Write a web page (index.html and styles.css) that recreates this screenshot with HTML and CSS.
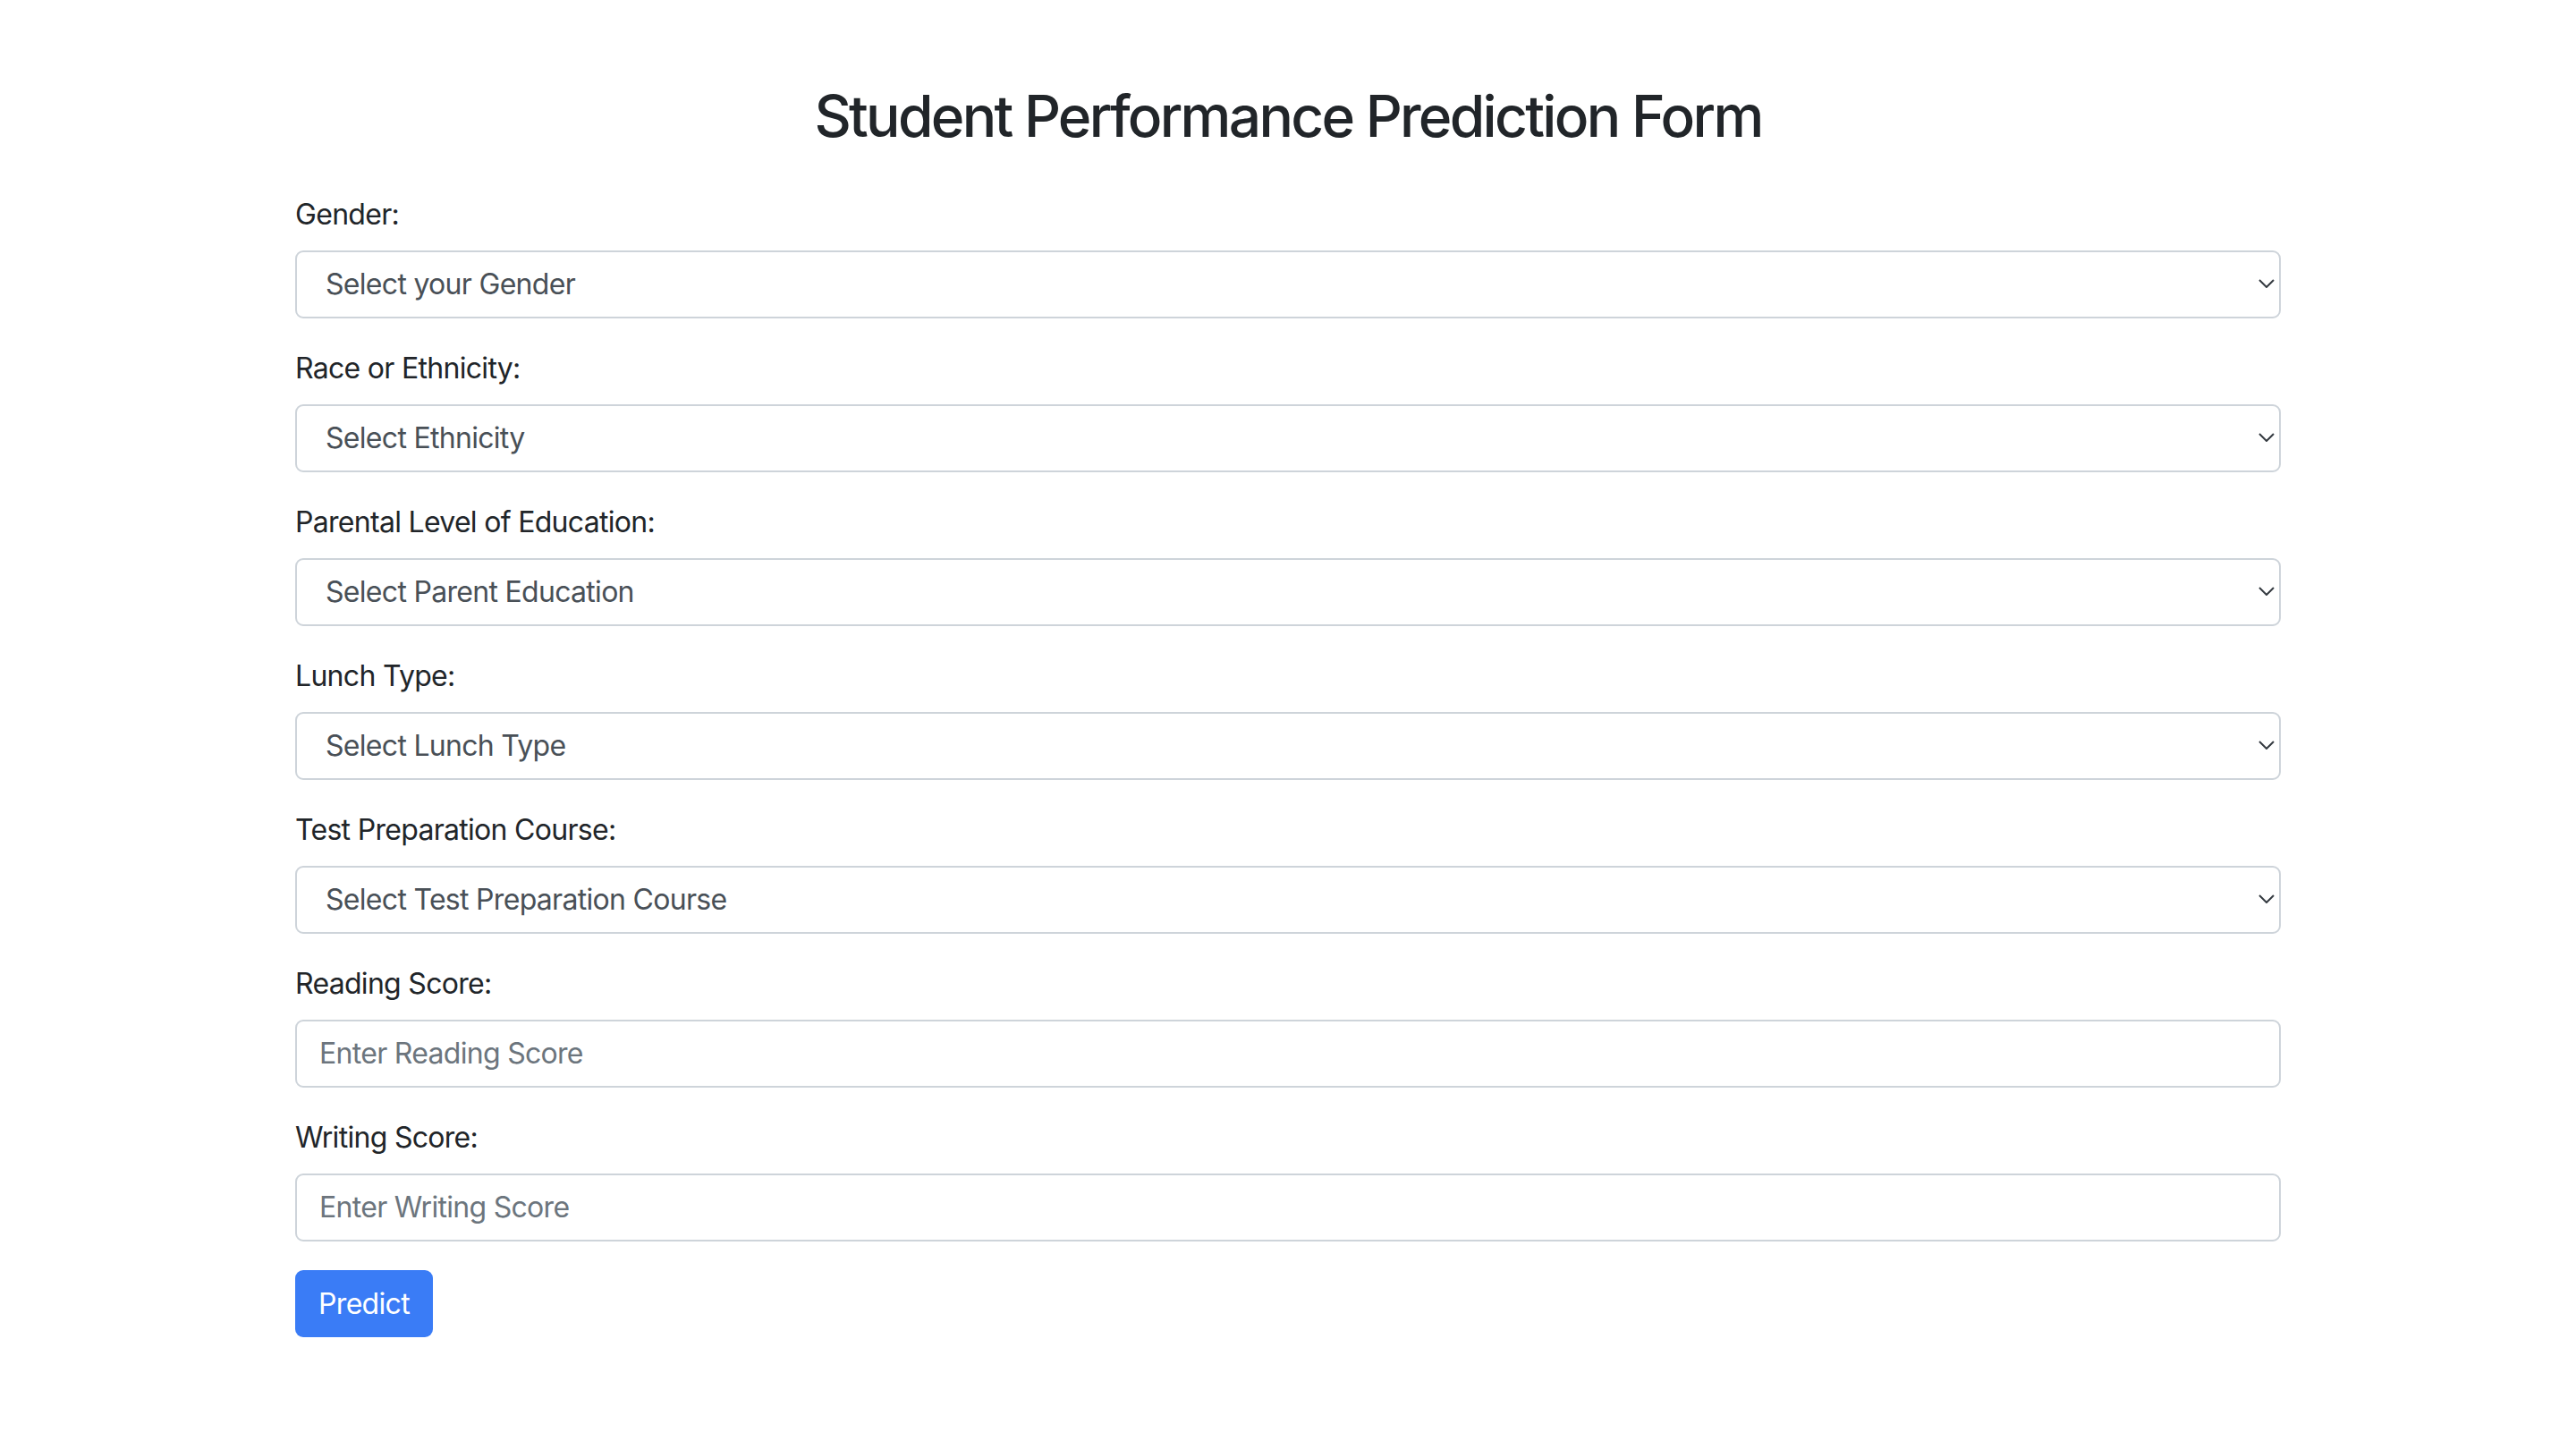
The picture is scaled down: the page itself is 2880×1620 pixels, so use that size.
FILE: index.html
```html
<!DOCTYPE html>
<html lang="en">
<head>
<meta charset="utf-8">
<title>Student Performance Prediction Form</title>
<link rel="stylesheet" href="styles.css">
</head>
<body>
<div class="container">
  <h2 class="title">Student Performance Prediction Form</h2>
  <form class="form">
    <div class="group">
      <label class="label" for="gender">Gender:</label>
      <div class="select-wrap">
        <select class="select" id="gender"><option>Select your Gender</option></select>
        <svg class="chev" viewBox="0 0 18 10" width="18" height="10"><path d="M1 1l8 8 8-8" fill="none" stroke="#343a40" stroke-width="2"/></svg>
      </div>
    </div>
    <div class="group">
      <label class="label" for="eth">Race or Ethnicity:</label>
      <div class="select-wrap">
        <select class="select" id="eth"><option>Select Ethnicity</option></select>
        <svg class="chev" viewBox="0 0 18 10" width="18" height="10"><path d="M1 1l8 8 8-8" fill="none" stroke="#343a40" stroke-width="2"/></svg>
      </div>
    </div>
    <div class="group">
      <label class="label" for="edu">Parental Level of Education:</label>
      <div class="select-wrap">
        <select class="select" id="edu"><option>Select Parent Education</option></select>
        <svg class="chev" viewBox="0 0 18 10" width="18" height="10"><path d="M1 1l8 8 8-8" fill="none" stroke="#343a40" stroke-width="2"/></svg>
      </div>
    </div>
    <div class="group">
      <label class="label" for="lunch">Lunch Type:</label>
      <div class="select-wrap">
        <select class="select" id="lunch"><option>Select Lunch Type</option></select>
        <svg class="chev" viewBox="0 0 18 10" width="18" height="10"><path d="M1 1l8 8 8-8" fill="none" stroke="#343a40" stroke-width="2"/></svg>
      </div>
    </div>
    <div class="group">
      <label class="label" for="prep">Test Preparation Course:</label>
      <div class="select-wrap">
        <select class="select" id="prep"><option>Select Test Preparation Course</option></select>
        <svg class="chev" viewBox="0 0 18 10" width="18" height="10"><path d="M1 1l8 8 8-8" fill="none" stroke="#343a40" stroke-width="2"/></svg>
      </div>
    </div>
    <div class="group">
      <label class="label" for="read">Reading Score:</label>
      <input class="input" id="read" type="number" placeholder="Enter Reading Score">
    </div>
    <div class="group">
      <label class="label" for="write">Writing Score:</label>
      <input class="input" id="write" type="number" placeholder="Enter Writing Score">
    </div>
    <button class="btn" type="button">Predict</button>
  </form>
</div>
</body>
</html>
```
FILE: styles.css
```css
* { box-sizing: border-box; }
html, body { margin: 0; padding: 0; background: #fff; }
body {
  font-family: Inter, "Noto Sans", "Liberation Sans", sans-serif;
  color: #212529;
}
.container {
  width: 2220px;
  margin: 0 auto;
}
.title {
  font-size: 64px;
  font-weight: 500;
  line-height: 1.2;
  text-align: center;
  margin: 92px 0 47px;
  color: #212529;
  letter-spacing: -2.7px;
}
.form { display: flex; flex-direction: column; }
.group { margin-bottom: 32px; }
.label {
  display: block;
  font-size: 32px;
  line-height: 48px;
  margin-bottom: 16px;
  color: #212529;
  letter-spacing: -0.7px;
}
.select-wrap { position: relative; }
.select, .input {
  display: block;
  width: 100%;
  height: 76px;
  border: 2px solid #ced4da;
  border-radius: 9px;
  background: #fff;
  font-family: inherit;
  font-size: 32px;
  letter-spacing: -0.7px;
  color: #495057;
  outline: none;
  margin: 0;
}
.select {
  appearance: none;
  -webkit-appearance: none;
  padding: 0 60px 0 32px;
}
.input {
  padding: 0 25px;
}
.input::placeholder { color: #6c757d; opacity: 1; }
.input::-webkit-outer-spin-button,
.input::-webkit-inner-spin-button { -webkit-appearance: none; margin: 0; }
.chev {
  position: absolute;
  right: 7px;
  top: 32px;
  width: 18px;
  height: 10px;
}
.btn {
  align-self: flex-start;
  width: 154px;
  height: 75px;
  border: none;
  border-radius: 9px;
  background: #3a7cf6;
  color: #fff;
  font-family: inherit;
  font-size: 32px;
  letter-spacing: -0.7px;
  padding: 0;
}
```
